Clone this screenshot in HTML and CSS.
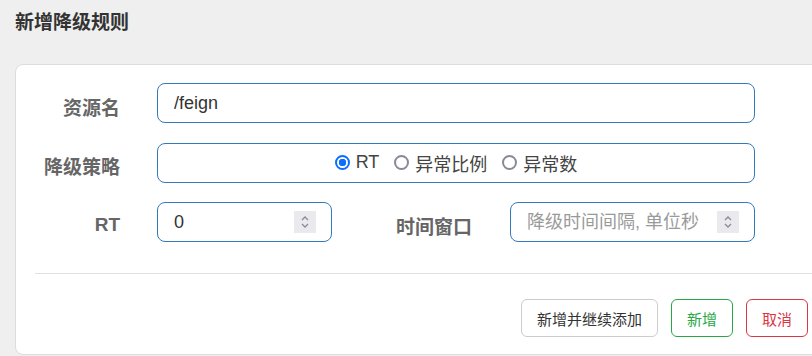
FILE: index.html
```html
<!DOCTYPE html>
<html lang="zh-CN">
<head>
  <meta charset="UTF-8">
  <meta name="viewport" content="width=device-width, initial-scale=1.0">
  <title>新增降级规则</title>
  <link rel="stylesheet" href="styles.css">
</head>
<body>
  <h1 class="page-title">新增降级规则</h1>

  <div class="card">
    <form class="rule-form">
      <!-- 资源名 -->
      <div class="form-row">
        <label class="form-label" for="resource">资源名</label>
        <div class="field field-wide">
          <input id="resource" type="text" value="/feign">
        </div>
      </div>

      <!-- 降级策略 -->
      <div class="form-row">
        <span class="form-label">降级策略</span>
        <div class="field field-wide radio-group">
          <label class="radio-item"><span class="radio checked"></span>RT</label>
          <label class="radio-item"><span class="radio"></span>异常比例</label>
          <label class="radio-item"><span class="radio"></span>异常数</label>
        </div>
      </div>

      <!-- RT / 时间窗口 -->
      <div class="form-row">
        <label class="form-label" for="rt">RT</label>
        <div class="field field-rt">
          <input id="rt" type="text" value="0">
          <span class="spinner">
            <svg width="10" height="16" viewBox="0 0 10 16"><path d="M2 6 L5 3 L8 6 M2 10 L5 13 L8 10" fill="none" stroke="#8a8a96" stroke-width="1.3"/></svg>
          </span>
        </div>
        <label class="form-label form-label-mid" for="window">时间窗口</label>
        <div class="field field-window">
          <input id="window" type="text" placeholder="降级时间间隔, 单位秒">
          <span class="spinner">
            <svg width="10" height="16" viewBox="0 0 10 16"><path d="M2 6 L5 3 L8 6 M2 10 L5 13 L8 10" fill="none" stroke="#8a8a96" stroke-width="1.3"/></svg>
          </span>
        </div>
      </div>
    </form>

    <hr class="divider">

    <div class="footer">
      <button class="btn btn-default">新增并继续添加</button>
      <button class="btn btn-success">新增</button>
      <button class="btn btn-danger">取消</button>
    </div>
  </div>
</body>
</html>
```

FILE: styles.css
```css
:root {
  --field-border: #3579bd;
  --radio-blue: #0d6efd;
  --text-dark: #333;
  --label-gray: #666;
  --placeholder: #9a9a9a;
}

* {
  margin: 0;
  padding: 0;
  box-sizing: border-box;
}

body {
  font-family: 'Liberation Sans', 'Noto Sans CJK SC', sans-serif;
  background: #efefef;
  padding-left: 15px;
  overflow: hidden;
  height: 356px;
}

.page-title {
  font-size: 19px;
  font-weight: 700;
  color: var(--text-dark);
  line-height: 22px;
  padding-top: 12px;
  margin-bottom: 30px;
}

.card {
  background: white;
  border: 1px solid #dcdcdc;
  border-radius: 8px;
  width: 830px;
  height: 291px;
  padding-top: 18px;
}

.form-row {
  display: flex;
  align-items: center;
  height: 40px;
  margin-bottom: 19.5px;
}

.form-label {
  width: 104px;
  margin-right: 37px;
  padding-top: 6px;
  text-align: right;
  font-size: 19px;
  font-weight: 700;
  color: var(--label-gray);
}

.form-label-mid {
  width: 140px;
  margin-right: 38px;
}

.field {
  height: 40px;
  border: 1px solid var(--field-border);
  border-radius: 8px;
  display: flex;
  align-items: center;
  padding: 0 15px 0 16px;
}

.field input {
  border: none;
  outline: none;
  background: transparent;
  font-family: inherit;
  font-size: 18px;
  color: var(--text-dark);
  flex: 1;
  min-width: 0;
}

.field input::placeholder {
  color: var(--placeholder);
}

.field-wide {
  width: 598px;
}

.field-rt {
  width: 175px;
}

.field-window {
  width: 245px;
}

.spinner {
  width: 22px;
  height: 22px;
  background: #e9e9ee;
  display: flex;
  align-items: center;
  justify-content: center;
}

.radio-group {
  justify-content: center;
  gap: 15px;
  padding: 0;
}

.radio-item {
  display: inline-flex;
  align-items: center;
  gap: 6px;
  font-size: 18px;
  color: #444;
}

.radio {
  width: 15px;
  height: 15px;
  border-radius: 50%;
  border: 2px solid #8a8a96;
}

.radio.checked {
  border-color: var(--radio-blue);
  background: radial-gradient(circle, var(--radio-blue) 0 3.5px, white 4px);
}

.divider {
  border: none;
  border-top: 1px solid #e2e2e2;
  margin: 31px 0 0 19px;
}

.footer {
  display: flex;
  gap: 13px;
  margin: 25px 0 0 505px;
}

.btn {
  height: 38px;
  padding: 0 15px;
  font-family: inherit;
  font-size: 15px;
  background: white;
  border: 1px solid #ccc;
  border-radius: 6px;
  color: var(--text-dark);
}

.btn-success {
  border-color: #28a745;
  color: #28a745;
}

.btn-danger {
  border-color: #dc3545;
  color: #dc3545;
}
```
